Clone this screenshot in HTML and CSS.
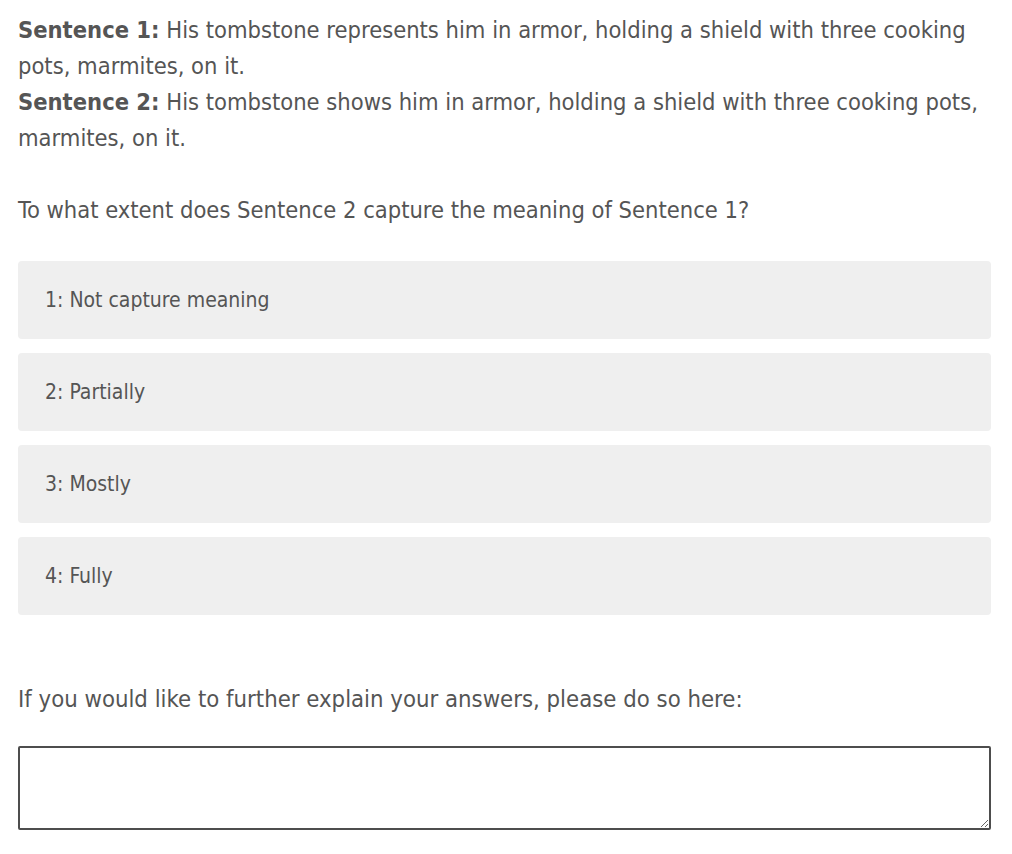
FILE: index.html
```html
<!DOCTYPE html>
<html>
<head>
<meta charset="utf-8">
<link rel="stylesheet" href="styles.css">
</head>
<body>
<div class="page">
  <div class="pair">
    <p class="sent"><b>Sentence 1:</b> His tombstone represents him in armor, holding a shield with three cooking pots, marmites, on it.</p>
    <p class="sent"><b>Sentence 2:</b> His tombstone shows him in armor, holding a shield with three cooking pots, marmites, on it.</p>
  </div>
  <p class="question">To what extent does Sentence 2 capture the meaning of Sentence 1?</p>
  <div class="options">
    <div class="option">1: Not capture meaning</div>
    <div class="option">2: Partially</div>
    <div class="option">3: Mostly</div>
    <div class="option">4: Fully</div>
  </div>
  <p class="explain">If you would like to further explain your answers, please do so here:</p>
  <textarea class="comment"></textarea>
</div>
</body>
</html>
```
FILE: styles.css
```css
html, body {
  margin: 0;
  padding: 0;
  background: #fff;
}
.page {
  width: 973px;
  padding: 12px 0 0 18px;
  font-family: "DejaVu Sans Condensed", "DejaVu Sans", sans-serif;
  color: #555;
  font-size: 23.5px;
  line-height: 36px;
}
.sent {
  margin: 0;
}
.question {
  margin: 36px 0 33px;
}
.options {
  display: flex;
  flex-direction: column;
  gap: 14px;
}
.option {
  background: #efefef;
  border-radius: 4px;
  height: 78px;
  display: flex;
  align-items: center;
  padding-left: 27px;
  font-size: 21px;
}
.explain {
  margin: 66px 0 29px;
  font-size: 23.7px;
}
.comment {
  display: block;
  box-sizing: border-box;
  width: 973px;
  height: 84px;
  border: 2px solid #4d4d4d;
  border-radius: 2px;
  margin: 0;
  resize: vertical;
}
```
